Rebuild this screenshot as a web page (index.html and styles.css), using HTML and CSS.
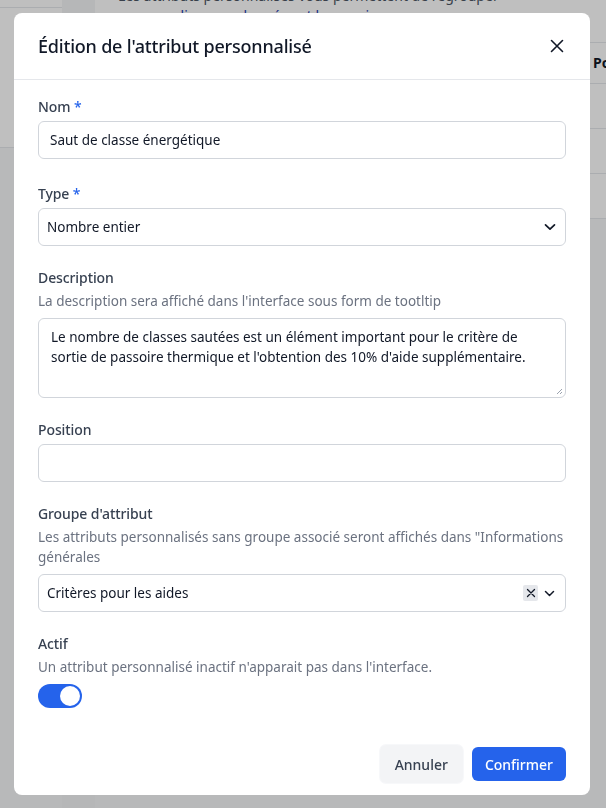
FILE: index.html
```html
<!DOCTYPE html>
<html lang="fr">
<head>
<meta charset="utf-8">
<title>Édition de l'attribut personnalisé</title>
<link rel="stylesheet" href="styles.css">
</head>
<body>
<div class="app">
  <div class="sidebar"><div class="sb-top"></div><div class="sb-mid"></div></div>
  <div class="rail"></div>
  <div class="main">
    <div class="intro-box">
      <p class="intro">Les attributs personnalisés vous permettent de regrouper<br><span class="intro-link">personnalisez vos données et les sessions</span></p>
    </div>
    <div class="table">
      <div class="trow thead">Position</div>
      <div class="trow"></div>
      <div class="trow"></div>
      <div class="trow"></div>
    </div>
  </div>
</div>

<div class="overlay">
  <div class="modal">
    <div class="modal-header">
      <h2 class="modal-title">Édition de l'attribut personnalisé</h2>
      <button class="close-btn" aria-label="Fermer">
        <svg width="14" height="14" viewBox="0 0 14 14"><path d="M1.5 1.5 L12.5 12.5 M12.5 1.5 L1.5 12.5" stroke="#111827" stroke-width="1.6" stroke-linecap="round" fill="none"/></svg>
      </button>
    </div>
    <div class="modal-body">
      <div class="field first">
        <label class="label">Nom <span class="req">*</span></label>
        <div class="input"><span class="value pad-l">Saut de classe énergétique</span></div>
      </div>
      <div class="field">
        <label class="label">Type <span class="req">*</span></label>
        <div class="input select"><span class="value">Nombre entier</span>
          <svg class="chev" width="12" height="8" viewBox="0 0 12 8"><path d="M1.5 1.8 L6 6.2 L10.5 1.8" stroke="#111827" stroke-width="1.7" fill="none" stroke-linecap="round" stroke-linejoin="round"/></svg>
        </div>
      </div>
      <div class="field">
        <label class="label">Description</label>
        <p class="help">La description sera affiché dans l'interface sous form de tootltip</p>
        <div class="input textarea"><span class="value">Le nombre de classes sautées est un élément important pour le critère de sortie de passoire thermique et l'obtention des 10% d'aide supplémentaire.</span>
          <svg class="grip" width="8" height="8" viewBox="0 0 8 8"><path d="M7 2 L2 7 M7 5 L5 7" stroke="#9ca3af" stroke-width="1" fill="none"/></svg>
        </div>
      </div>
      <div class="field">
        <label class="label">Position</label>
        <div class="input"></div>
      </div>
      <div class="field">
        <label class="label">Groupe d'attribut</label>
        <p class="help">Les attributs personnalisés sans groupe associé seront affichés dans "Informations générales</p>
        <div class="input select"><span class="value">Critères pour les aides</span>
          <span class="clear"><svg width="10" height="10" viewBox="0 0 10 10"><path d="M1.5 1.5 L8.5 8.5 M8.5 1.5 L1.5 8.5" stroke="#111827" stroke-width="1.3" fill="none" stroke-linecap="round"/></svg></span>
          <svg class="chev small" width="11" height="7" viewBox="0 0 11 7"><path d="M1.5 1.5 L5.5 5.5 L9.5 1.5" stroke="#111827" stroke-width="1.5" fill="none" stroke-linecap="round" stroke-linejoin="round"/></svg>
        </div>
      </div>
      <div class="field">
        <label class="label">Actif</label>
        <p class="help">Un attribut personnalisé inactif n'apparait pas dans l'interface.</p>
        <div class="toggle"><span class="knob"></span></div>
      </div>
    </div>
    <div class="modal-footer">
      <button class="btn btn-secondary">Annuler</button>
      <button class="btn btn-primary">Confirmer</button>
    </div>
  </div>
</div>
</body>
</html>
```

FILE: styles.css
```css
* { box-sizing: border-box; }
html, body { margin: 0; padding: 0; }
body {
  font-family: "Noto Sans", "Open Sans", sans-serif;
  color: #111827;
  background: #f6f7f9;
  width: 606px;
  height: 808px;
  overflow: hidden;
}

/* underlying page */
.app { display: flex; height: 808px; }
.sidebar { width: 62px; }
.sb-top { height: 8px; background: #fff; border-bottom: 1px solid #e5e7eb; }
.sb-mid { height: 140px; background: #fff; border-bottom: 1px solid #e5e7eb; }
.rail { width: 33px; background: #f3f4f6; }
.main { flex: 1; overflow: hidden; }
.intro-box { background: #fff; height: 42px; overflow: hidden; }
.intro { margin: -14px 0 0 23px; font-size: 14px; line-height: 20px; color: #4b5563; white-space: nowrap; }
.intro-link { color: #1e40af; }
.table { margin: 0 0 0 495px; background: #fff; }
.trow { height: 45px; border-bottom: 1px solid #e5e7eb; }
.table .trow:first-child { border-top: 1px solid #e5e7eb; height: 42px; }
.thead { font-weight: 700; font-size: 14px; line-height: 40px; padding-left: 3px; color: #111827; }

/* overlay & modal */
.overlay {
  position: fixed;
  inset: 0;
  background: rgba(0, 0, 0, 0.25);
  display: flex;
  align-items: flex-start;
  padding: 13px 0 0 14px;
}
.modal {
  width: 576px;
  background: #fff;
  border-radius: 8px;
  overflow: hidden;
}
.modal-header {
  height: 67px;
  display: flex;
  align-items: center;
  justify-content: space-between;
  padding: 0 26px 0 24px;
  border-bottom: 1px solid #e5e7eb;
}
.modal-title {
  margin: 0;
  font-size: 18px;
  font-weight: 500;
  color: #111827;
  letter-spacing: -0.2px;
}
.close-btn {
  border: 0;
  background: none;
  padding: 0;
  display: flex;
  width: 14px;
  height: 14px;
}

.modal-body { padding: 17px 24px 0; }
.field { margin-bottom: 22px; }
.field.first { margin-bottom: 25px; }
.field:last-child { margin-bottom: 0; }
.label {
  display: block;
  font-size: 14px;
  line-height: 20px;
  font-weight: 500;
  color: #374151;
  margin-bottom: 4px;
  letter-spacing: -0.1px;
}
.req { color: #2563eb; }
.help {
  margin: 0 0 7px;
  font-size: 13.5px;
  line-height: 20px;
  color: #6b7280;
}
.label + .help { margin-top: -1px; }

.input {
  height: 38px;
  border: 1px solid #d1d5db;
  border-radius: 6px;
  display: flex;
  align-items: center;
  padding: 0 8px;
  font-size: 13.5px;
  color: #111827;
  position: relative;
}
.value.pad-l { padding-left: 3px; }
.select .value { flex: 1; }
.chev { margin-right: 1px; }
.chev.small { margin-left: 6px; margin-right: 2px; }
.clear {
  width: 15px;
  height: 16px;
  background: #e5e7eb;
  border-radius: 2px;
  display: flex;
  align-items: center;
  justify-content: center;
}
.textarea {
  height: 80px;
  align-items: flex-start;
  padding: 8px 12px;
  line-height: 20px;
}
.grip { position: absolute; right: 2px; bottom: 2px; }

.toggle {
  width: 44px;
  height: 24px;
  border-radius: 12px;
  background: #2563eb;
  display: flex;
  align-items: center;
  justify-content: flex-end;
  padding: 2px;
}
.knob {
  width: 20px;
  height: 20px;
  border-radius: 50%;
  background: #fff;
}

.modal-footer {
  display: flex;
  justify-content: flex-end;
  align-items: center;
  gap: 9px;
  padding: 37px 24px 12px;
}
.btn {
  font-family: inherit;
  font-size: 14px;
  font-weight: 500;
  border: 0;
  border-radius: 6px;
  cursor: pointer;
}
.btn-secondary {
  height: 38px;
  padding: 0 15px;
  background: #f3f4f6;
  color: #374151;
  box-shadow: 0 0 0 1px #f7f8fa;
}
.btn-primary {
  height: 34px;
  padding: 0 13px;
  background: #2563eb;
  color: #fff;
}
```
